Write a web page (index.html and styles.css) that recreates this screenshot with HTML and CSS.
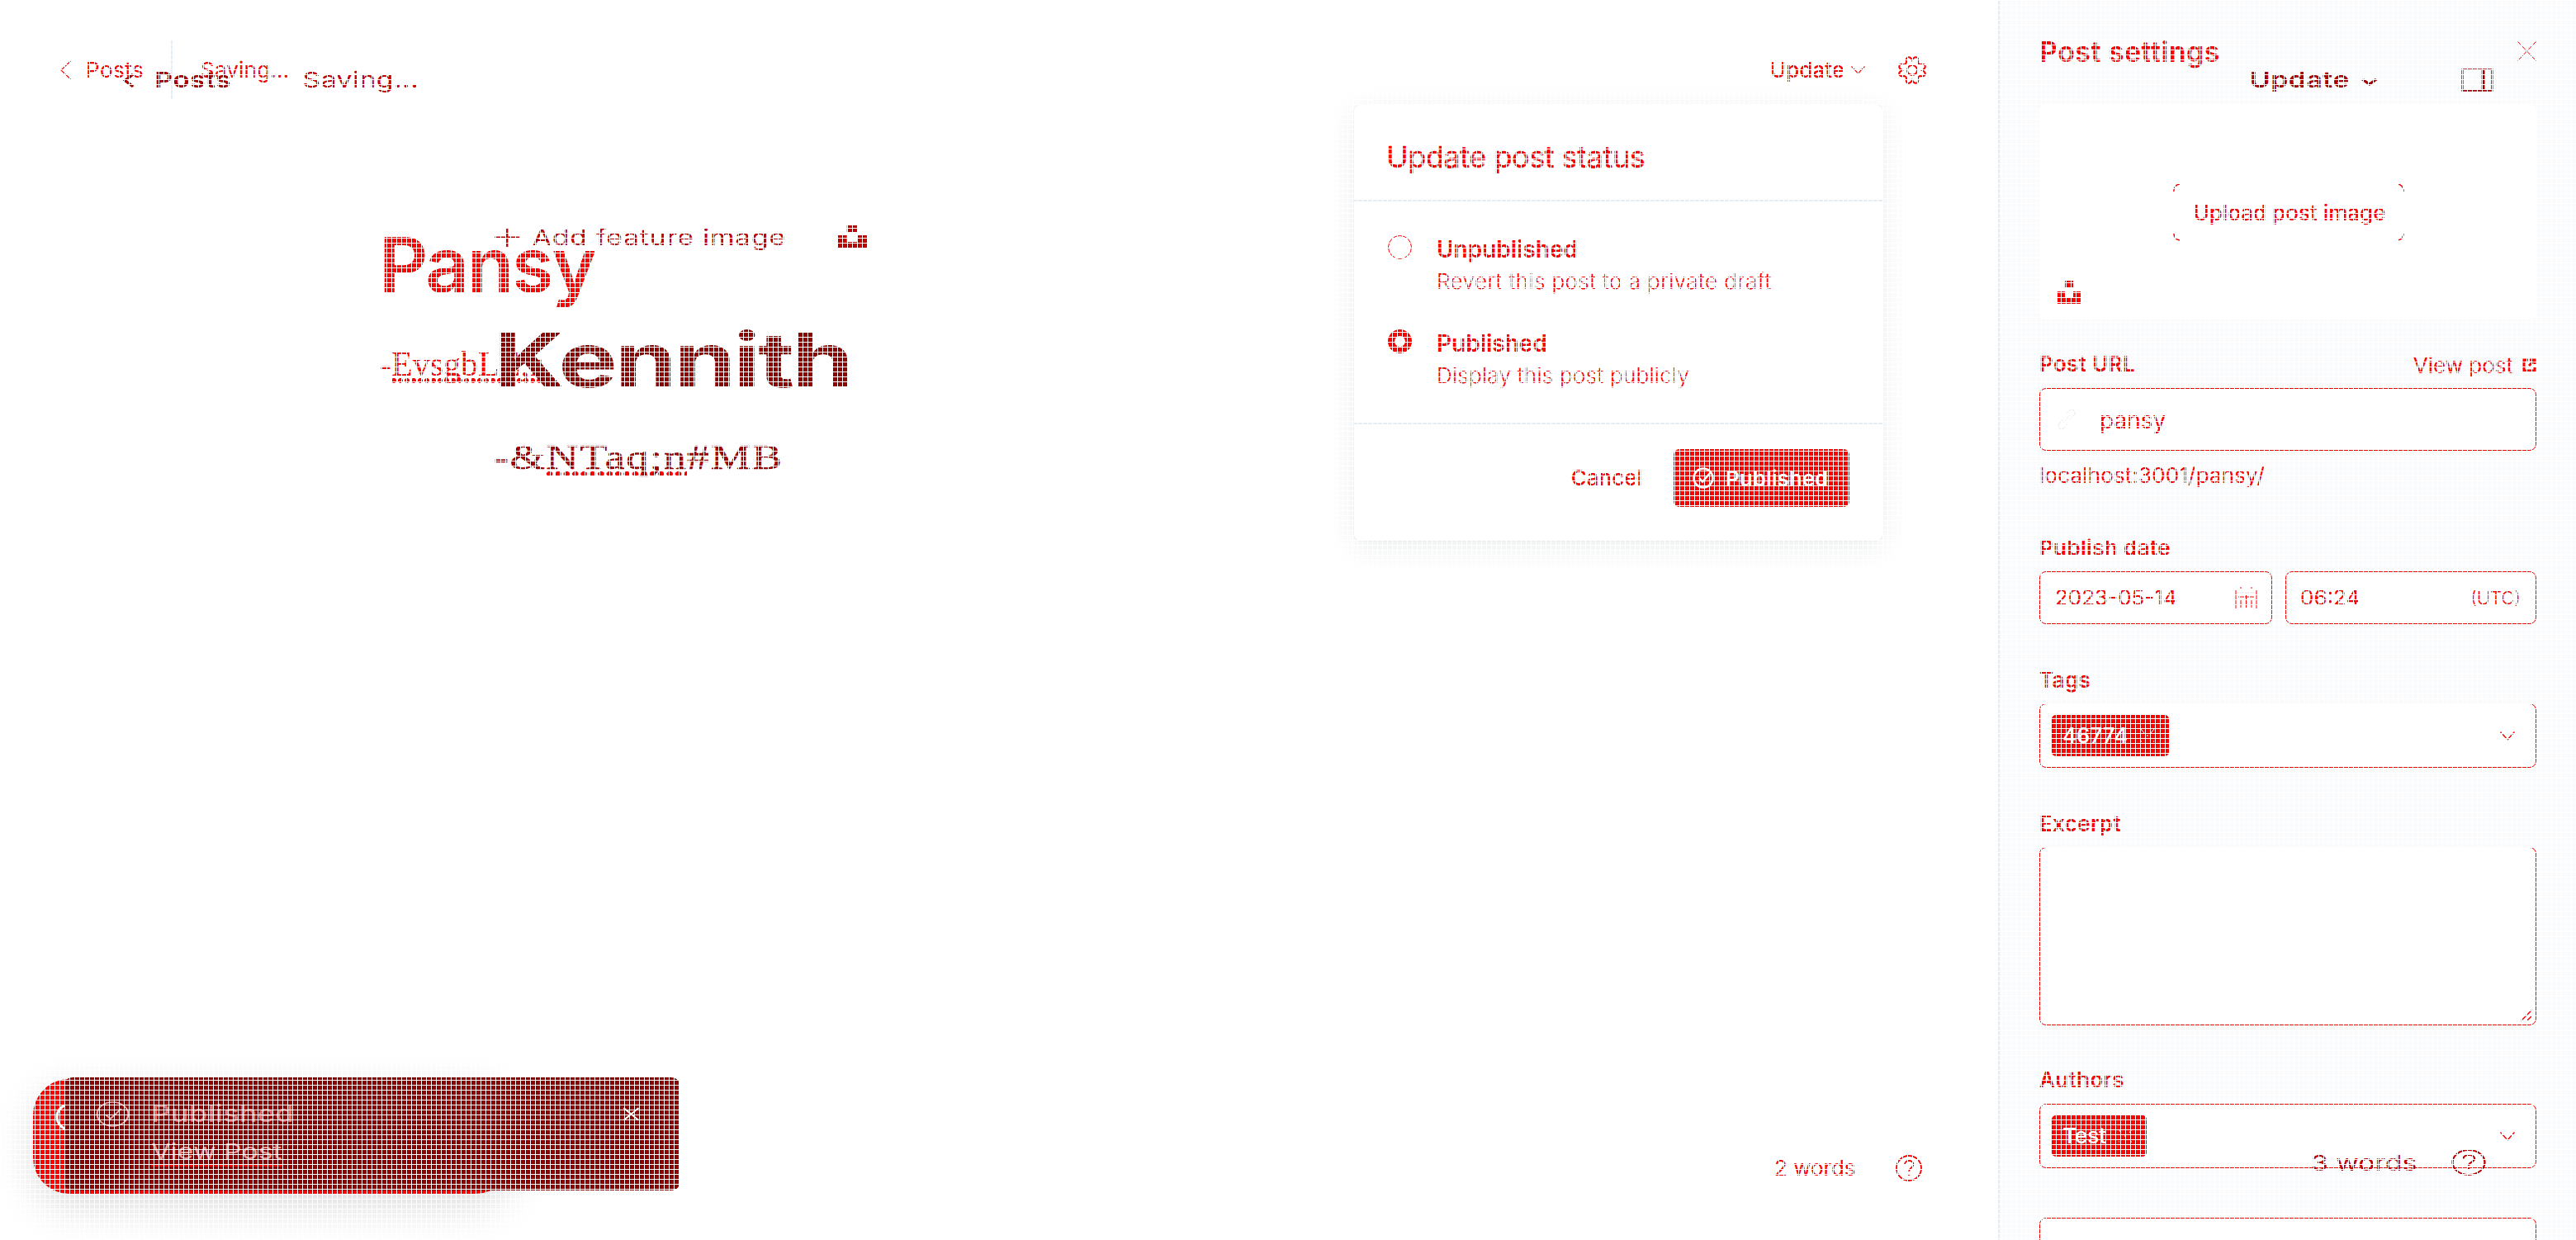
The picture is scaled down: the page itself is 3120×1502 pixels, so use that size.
FILE: index.html
```html
<!DOCTYPE html>
<html lang="en">
<head>
<meta charset="utf-8">
<title>Post editor</title>
<link rel="stylesheet" href="styles.css">
</head>
<body>
<div class="scene">
  <div class="app">
    <main class="editor">
      <header class="topbar">
        <svg class="back" width="14" height="24" viewBox="0 0 14 24"><path d="M12.500 1 1 12l11.500 11"/></svg>
        <span class="text posts">Posts</span>
        <i class="divider"></i>
        <span class="text saving">Saving...</span>
        <span class="text update">Update</span>
        <svg class="caret" width="17" height="10" viewBox="0 0 17 10"><path d="m.5.500 8 8.500 8-8.500"/></svg>
        <svg class="gear" width="34" height="34" viewBox="0 0 34 34"><circle cx="17" cy="17" r="6"/><path d="M17 5C14-1 8.500.500 10 7.500Q9.500 9.500 7.500 10C.5 8.500-1 14 5 17-1 20 .5 25.500 7.500 24Q9.500 24.500 10 26.500C8.500 33.500 14 35 17 29 20 35 25.500 33.500 24 26.500Q24.500 24.500 26.500 24C33.500 25.500 35 20 29 17 35 14 33.500 8.500 26.500 10Q24.500 9.500 24 7.500C25.500.500 20-1 17 5z"/></svg>
      </header>
      <h1 class="title">Pansy</h1>
      <p class="body-text">-<span class="misspelt">EvsgbLE;r</span></p>
      <footer class="status">
        <span class="text words">2 words</span>
        <svg class="help" width="32" height="32" viewBox="0 0 32 32"><circle cx="16" cy="16" r="15"/><path d="M11 11.500c0-6 10.500-6 10.500 0 0 4-5.500 4-5.500 8.500M16 23v2"/></svg>
      </footer>
    </main>
    <aside class="settings">
      <div class="settings-head">
        <h2 class="text heading">Post settings</h2>
        <svg width="23" height="24" viewBox="0 0 23 24"><path d="m.5.500 22 23M22.500.500l-22 23"/></svg>
      </div>
      <div class="uploader">
        <div class="upload-button">
          <svg class="corners" width="280" height="70" viewBox="0 0 280 70"><path d="M.8 10Q1 2 8 1M272 1q7 1 7.200 9M.8 60Q1 68 8 69M272 69q7-1 7.200-9"/></svg>
          <span class="text upload">Upload post image</span>
        </div>
        <svg class="unsplash" width="28" height="28" viewBox="0 0 28 28"><path d="M9 0h10v8H9zM0 13h9v8h10v-8h9v15H0z"/></svg>
      </div>
      <div class="label-row">
        <span class="text label">Post URL</span>
        <span class="text view">View post</span>
        <svg class="external" width="17" height="17" viewBox="0 0 17 17"><path d="M7 2H2v13h13v-5M9 2h6v5M15 2 8 9"/></svg>
      </div>
      <div class="field url">
        <svg class="link" width="24" height="26" viewBox="0 0 24 26"><path d="m8 17 8-9M11 7l5-5c4-3 8 2 5 6l-5 5M13 19l-5 5c-4 3-8-2-5-6l5-5"/></svg>
        <span class="text slug">pansy</span>
      </div>
      <p class="text address">localhost:3001/pansy/</p>
      <p class="text label l-date">Publish date</p>
      <div class="pair">
        <div class="field date">
          <span class="text">2023-05-14</span>
          <svg class="calendar" width="27" height="28" viewBox="0 0 27 28"><path class="faint" d="M1 8h25M5 20h17"/><path d="M1 5v22M26 5v22M7 1v2M20 1v2M4 13h19M13.500 10v16M7 17v9M20 17v9"/></svg>
        </div>
        <div class="field time">
          <span class="text">06:24</span>
          <span class="text utc">(UTC)</span>
        </div>
      </div>
      <p class="text label l-tags">Tags</p>
      <div class="field select tags">
        <span class="chip chip-tag"><span class="text">46774</span><svg width="18" height="18" viewBox="0 0 18 18"><path d="m1 1 4 5M17 1l-4 5M9 8v2M1 16h1M16 16h1"/></svg></span>
        <svg class="caret" width="18" height="11" viewBox="0 0 18 11"><path d="m.5.500 8.500 9.500 8.500-9.500"/></svg>
      </div>
      <p class="text label l-excerpt">Excerpt</p>
      <div class="field excerpt">
        <svg width="16" height="16" viewBox="0 0 16 16"><path d="M1 15 15 1M8 15l7-7"/></svg>
      </div>
      <p class="text label l-authors">Authors</p>
      <div class="field select authors">
        <span class="chip chip-author"><span class="text">Test</span><svg width="18" height="18" viewBox="0 0 18 18"><path d="m1 1 3 4M17 1l-3 4M9 8v2M1 16h1M16 16h1"/></svg></span>
        <svg class="caret" width="18" height="11" viewBox="0 0 18 11"><path d="m.5.500 8.500 9.500 8.500-9.500"/></svg>
      </div>
      <div class="field next"></div>
    </aside>
  </div>

  <section class="popup">
    <h3 class="text popup-title">Update post status</h3>
    <div class="options">
      <div class="option">
        <i class="radio"></i>
        <div><p class="text name">Unpublished</p><p class="text desc">Revert this post to a private draft</p></div>
      </div>
      <div class="option">
        <i class="radio checked"></i>
        <div><p class="text name">Published</p><p class="text desc desc-short">Display this post publicly</p></div>
      </div>
    </div>
    <div class="actions">
      <span class="text cancel">Cancel</span>
      <span class="primary">
        <svg width="26" height="26" viewBox="0 0 26 26"><circle cx="13" cy="13" r="11.500"/><path d="m8 13 4 4.500L22 6"/></svg>
        <span class="text done">Published</span>
      </span>
    </div>
  </section>

  <div class="toast-old"><svg width="34" height="34" viewBox="0 0 34 34"><circle cx="17" cy="17" r="15"/></svg></div>

  <div class="wide">
    <header class="wide-top">
      <svg class="back" width="10" height="17" viewBox="0 0 10 17"><path d="M9 1 1.500 8.500 9 16"/></svg>
      <span class="text w-posts">Posts</span>
      <span class="text w-saving">Saving...</span>
      <span class="text w-update">Update</span>
      <svg class="caret" width="15" height="9" viewBox="0 0 15 9"><path d="m1 1 6.500 6L14 1"/></svg>
      <svg class="panel" width="30" height="28" viewBox="0 0 30 28"><path d="M1.200 1.200h27.600v25.600H1.200z"/><path class="bar" d="M20.500 2v24"/></svg>
    </header>
    <div class="feature">
      <svg class="plus" width="23" height="23" viewBox="0 0 23 23"><path d="M11.500 0v23M0 11.500h23"/></svg>
      <span class="text w-feature">Add feature image</span>
      <svg class="unsplash" width="28" height="28" viewBox="0 0 28 28"><path d="M9 0h10v8H9zM0 12h9v8h10v-8h9v16H0z"/></svg>
    </div>
    <h1 class="w-title">Kennith</h1>
    <p class="w-body">-&amp;<span class="misspelt">NTaq;n</span>#MB</p>
    <footer class="wide-foot">
      <div class="toast">
        <svg class="ok" width="32" height="33" viewBox="0 0 32 33"><circle cx="16" cy="16.500" r="14.500"/><path d="m9 17 5 5 10-12"/></svg>
        <div class="toast-text"><p class="text w-pub">Published</p><p><span class="text w-view">View Post</span></p></div>
        <svg class="close" width="16" height="17" viewBox="0 0 16 17"><path d="m1 1 14 15M15 1 1 16"/></svg>
      </div>
      <span class="text w-words">3 words</span>
      <svg class="help" width="32" height="32" viewBox="0 0 32 32"><circle cx="16" cy="16" r="15"/><path d="M11 11.500c0-6 10.500-6 10.500 0 0 4-5.500 4-5.500 8.500M16 23v2"/></svg>
    </footer>
  </div>
</div>
</body>
</html>
```
FILE: styles.css
```css
* { box-sizing: border-box; }
body { margin: 0; background: #fff; font-family: Inter, sans-serif; color: #f00; }
h1, h2, h3, p { margin: 0; font-weight: 400; }
svg { display: block; flex: none; fill: none; stroke: currentColor; stroke-width: 1.5; overflow: visible; }

.scene { position: relative; display: grid; width: 3120px; height: 1502px; overflow: hidden; }
.scene::after {
  content: ""; position: absolute; inset: 0; pointer-events: none;
  background:
    repeating-linear-gradient(90deg, #fff 0 1px, transparent 1px 6px),
    repeating-linear-gradient(#fff 0 1px, transparent 1px 6px);
}
.app, .wide { grid-area: 1 / 1; height: 1502px; }
.text { display: block; flex: none; font-size: 26px; line-height: 32px; white-space: nowrap; }
.unsplash { fill: currentColor; stroke: none; }

/* Editor column */
.app { display: grid; grid-template-columns: 2420px 700px; }
.editor { display: flex; flex-direction: column; height: 1502px; }
.topbar { display: flex; align-items: center; height: 71px; margin-top: 49px; padding: 0 87px 0 73px; }
.topbar .back, .topbar .caret { stroke-width: 1.1; }
.posts { margin-left: 17px; width: 103px; letter-spacing: .5px; }
.divider { width: 2px; height: 71px; background: #e5eef4; }
.saving { margin-left: 34px; letter-spacing: .2px; }
.update { margin-left: auto; width: 98px; font-weight: 500; }
.gear { margin-left: 40px; stroke-width: 2; }
.title { margin: 146px 0 0 459px; font-size: 92px; line-height: 110px; font-weight: 600; letter-spacing: -2.2px; white-space: nowrap; }
.body-text { margin: 40px 0 0 460px; font: 42px/50px "Liberation Serif", serif; white-space: nowrap; }
.misspelt { background: radial-gradient(circle at 3px 3px, #f00 2.700px, transparent 3.200px) 0 100% / 8px 6px repeat-x; }
.status { display: flex; align-items: center; margin: auto 92px 71px auto; }
.words { width: 147px; }
.help { stroke-width: 1.8; }

/* Settings column */
.settings { padding: 41px 48px 0 48px; border-left: 2px solid #e5eef4; background: #fafbfc; overflow: hidden; }
.settings-head { display: flex; justify-content: space-between; height: 85px; }
.settings-head svg { margin-top: 9px; stroke-width: 1; }
.heading { font-size: 34px; line-height: 44px; font-weight: 600; letter-spacing: .45px; }
.uploader { position: relative; display: flex; justify-content: center; align-items: center; height: 261px; border-radius: 8px; background: #fff; }
.upload-button { position: relative; display: flex; width: 280px; height: 70px; align-items: center; justify-content: center; transform: translateX(1px); }
.corners { position: absolute; left: 0; top: 0; }
.upload { font-weight: 500; padding: 3px 0 0 2px; }
.uploader .unsplash { position: absolute; left: 22px; bottom: 19px; }
.label { font-weight: 600; letter-spacing: .35px; }
.label-row { display: flex; height: 83px; padding-top: 38px; }
.view { margin: 2px 11px 0 auto; }
.external { margin-top: 9px; stroke-width: 3; }
.field { display: flex; align-items: center; border: 1px solid #f00; border-radius: 8px; background: #fff; }
.url { height: 76px; padding-left: 20px; }
.link { color: #e5e9ed; stroke-width: 1; }
.slug { margin-left: 28px; font-size: 28px; padding-top: 2px; }
.address { margin-top: 14px; letter-spacing: .15px; }
.l-date { margin-top: 56px; }
.pair { display: flex; gap: 16px; margin-top: 12px; }
.pair .field { height: 64px; }
.date { width: 282px; justify-content: space-between; padding: 0 17px 0 18px; }
.time { flex: 1; justify-content: space-between; padding: 0 18px 0 17px; }
.calendar { stroke-width: 1; }
.faint { color: #dfe5ea; }
.utc { font-size: 22px; font-weight: 300; }
.l-tags { margin-top: 52px; }
.tags { margin-top: 12px; }
.select { height: 78px; padding: 0 25px 0 14px; justify-content: space-between; }
.chip { display: flex; align-items: center; height: 50px; padding: 0 17px 0 13px; justify-content: space-between; border-radius: 5px; background: #f00; color: #fff; }
.chip-tag { width: 142px; }
.chip-author { width: 115px; }
.chip .text { font-weight: 500; }
.chip svg { stroke-width: 1; }
.l-excerpt { margin-top: 52px; }
.excerpt { height: 216px; margin-top: 12px; padding: 3px; align-items: flex-end; justify-content: flex-end; }
.l-authors { margin-top: 50px; }
.authors { margin-top: 13px; }
.next { height: 100px; margin-top: 60px; }

/* Status popup */
.popup { position: absolute; left: 1640px; top: 127px; width: 640px; height: 528px; border-radius: 8px; background: #fff; box-shadow: 0 0 2px rgba(20, 30, 40, .12), 0 8px 36px rgba(20, 40, 50, .09); }
.popup-title { height: 117px; padding: 41px 0 0 39px; border-bottom: 2px solid #e5eef4; font-size: 36px; line-height: 44px; letter-spacing: -.45px; -webkit-text-stroke: .4px; }
.options { display: flex; flex-direction: column; gap: 38px; height: 270px; padding: 40px 41px 0; border-bottom: 2px solid #e5eef4; }
.option { display: flex; gap: 30px; height: 76px; }
.radio { flex: none; width: 29px; height: 29px; margin-top: 1px; border: 1px solid #f00; border-radius: 50%; }
.checked { border-width: 8px; }
.name { font-size: 28px; line-height: 36px; font-weight: 600; }
.desc { line-height: 40px; font-weight: 300; letter-spacing: .42px; padding-top: 1px; }
.desc-short { letter-spacing: .28px; }
.actions { display: flex; align-items: center; justify-content: flex-end; gap: 38px; padding: 30px 40px; }
.cancel { font-weight: 500; }
.primary { display: flex; align-items: center; width: 213px; height: 70px; padding-left: 23px; gap: 14px; border-radius: 7px; background: #f00; color: #fff; }
.primary svg { stroke-width: 2.5; }
.done { font-weight: 600; padding-top: 1px; }

.toast-old { position: absolute; left: 40px; top: 1307px; width: 580px; height: 139px; padding: 29px 27px; border-radius: 44px; background: #f00; color: #fff; box-shadow: 0 16px 50px rgba(0, 0, 0, .15); }
.toast-old svg { stroke-width: 3; }

/* Wide layer, stretched over the app */
.wide { position: relative; display: flex; flex-direction: column; width: 2400px; transform: scaleX(1.3); transform-origin: 0 0; color: #c00000; }
.wide-top { display: flex; align-items: center; height: 32px; margin-top: 81px; padding-left: 115px; color: #a80000; }
.wide-top .back, .wide-top .caret { stroke-width: 3; }
.w-posts { width: 138px; margin-left: 19px; font-weight: 600; letter-spacing: .3px; }
.w-saving { width: 1814px; color: #c80000; letter-spacing: .3px; }
.w-update { width: 104px; font-weight: 600; letter-spacing: .4px; }
.wide-top .caret { margin-top: 5px; }
.panel { margin-left: 78px; stroke-width: 1.8; }
.bar { stroke-width: 3; }
.feature { display: flex; align-items: center; height: 32px; margin: 158px 0 0 461px; }
.plus { stroke-width: 1.8; }
.w-feature { width: 284px; margin-left: 12px; padding-top: 1px; letter-spacing: .58px; }
.w-title { margin: 78px 0 0 460px; font-size: 92px; line-height: 110px; font-weight: 700; letter-spacing: -2.100px; color: #8c0000; }
.w-body { margin: 38px 0 0 460px; font: 42px/50px "Liberation Serif", serif; letter-spacing: 1px; color: #a00000; white-space: nowrap; -webkit-text-stroke: .5px; }
.wide-foot { display: flex; align-items: center; height: 137px; margin: auto 84px 60px 60px; }
.toast { display: flex; width: 573px; height: 137px; padding: 26px 37px 0 29px; border-radius: 8px; background: #8c0000; }
.ok { margin-top: 2px; color: #eaa; stroke-width: 1.6; }
.toast-text { margin-left: 20px; color: #ea9494; }
.w-pub { padding-top: 2px; font-size: 28px; font-weight: 500; letter-spacing: .1px; color: #e07070; }
.w-view { margin-top: 15px; display: inline-block; border-bottom: 3px solid #f00; line-height: 30px; }
.close { margin: 10px 0 0 auto; color: #fff; stroke-width: 1.8; }
.w-words { width: 131px; margin: 71px 0 0 auto; }
.wide-foot .help { margin-top: 69px; }
```
